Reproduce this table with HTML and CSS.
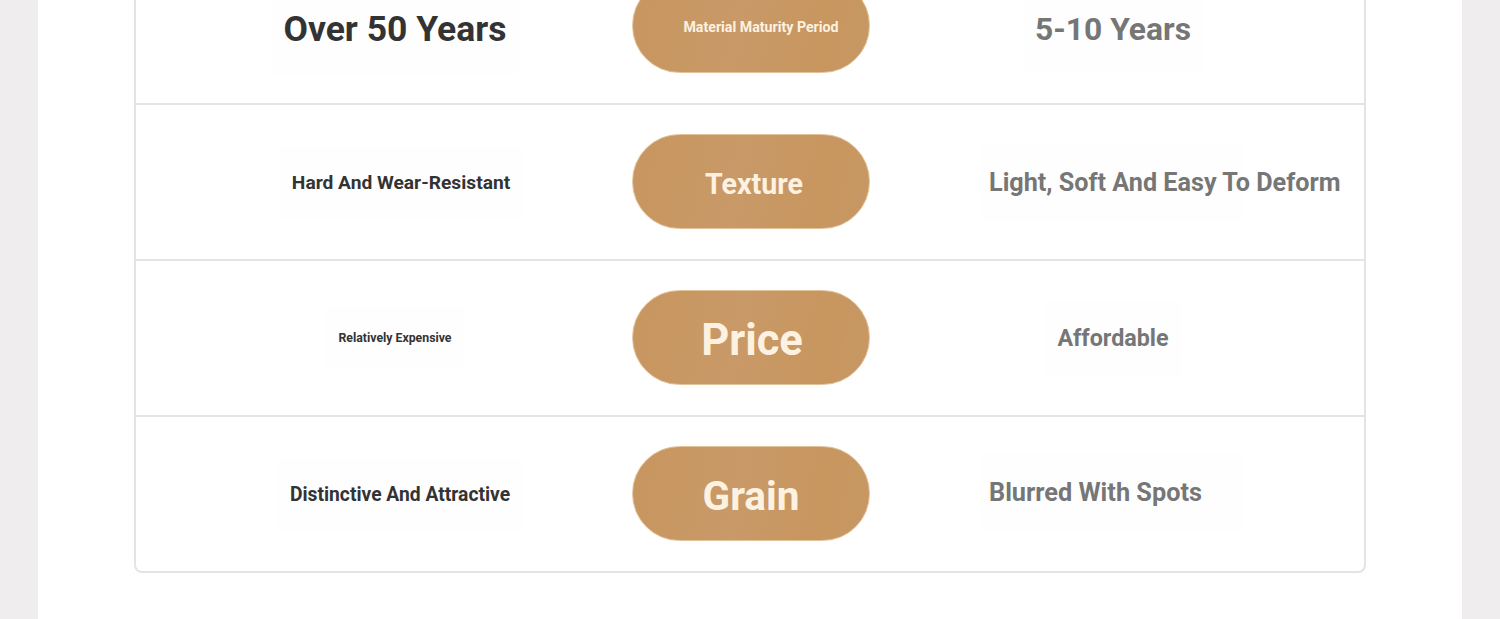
FILE: index.html
```html
<!DOCTYPE html>
<html lang="en">
<head>
<meta charset="utf-8">
<title>Comparison</title>
<link rel="stylesheet" href="styles.css">
</head>
<body>
<div class="page">
  <div class="table">
    <div class="row">
      <div class="cell left"><span class="box t-over">Over 50 Years</span></div>
      <div class="pill"><span class="p-mat">Material Maturity Period</span></div>
      <div class="cell right"><span class="box t-five">5-10 Years</span></div>
    </div>
    <div class="row">
      <div class="cell left"><span class="box t-hard">Hard And Wear-Resistant</span></div>
      <div class="pill"><span class="p-tex">Texture</span></div>
      <div class="cell right"><span class="box wide t-light">Light, Soft And Easy To Deform</span></div>
    </div>
    <div class="row">
      <div class="cell left"><span class="box t-rel">Relatively Expensive</span></div>
      <div class="pill"><span class="p-price">Price</span></div>
      <div class="cell right"><span class="box t-aff">Affordable</span></div>
    </div>
    <div class="row last">
      <div class="cell left"><span class="box t-dist">Distinctive And Attractive</span></div>
      <div class="pill"><span class="p-grain">Grain</span></div>
      <div class="cell right"><span class="box wide t-blur">Blurred With Spots</span></div>
    </div>
  </div>
</div>
</body>
</html>
```
FILE: styles.css
```css
* { box-sizing: border-box; }
html, body { margin: 0; padding: 0; }
body {
  background: #efeded;
  font-family: Roboto, "Liberation Sans", sans-serif;
  height: 619px;
  overflow: hidden;
}
.page {
  margin: 0 38px;
  background: #ffffff;
  height: 619px;
  padding: 0 96px;
  overflow: hidden;
}
.table {
  margin-top: -51px;
  border: 2px solid #e4e4e4;
  border-top: none;
  border-radius: 0 0 8px 8px;
}
.row {
  display: grid;
  grid-template-columns: 496px 238px 1fr;
  align-items: center;
  height: 156px;
  border-bottom: 2px solid #e4e4e4;
}
.row.last { height: 154px; border-bottom: none; }
.cell { display: flex; justify-content: center; align-items: center; }
.left { padding-left: 30px; }
.right { padding-right: 8px; }
.box {
  display: inline-block;
  white-space: nowrap;
  font-weight: 700;
  padding: 24px 12px;
  background: #fefefe;
}
.left .box { color: #333333; }
.right .box { color: #767676; }
.box.wide { width: 262px; text-align: left; padding-left: 7px; }
.t-over { font-size: 35.5px; margin-top: 6px; margin-left: -8px; }
.t-five { font-size: 31.8px; margin-top: 6px; }
.t-hard { font-size: 19.2px; margin-left: 4px; }
.t-light { font-size: 25.2px; }
.t-rel { font-size: 12.3px; margin-left: -8px; }
.t-aff { font-size: 23.3px; }
.t-dist { font-size: 19.3px; margin-left: 2px; }
.t-blur { font-size: 25.3px; margin-top: -4px; }
.pill {
  height: 95px;
  margin-top: -2px;
  border-radius: 48px;
  background: linear-gradient(100deg, #c8965f 0%, #c89a68 45%, #c8965f 80%, #c79865 100%);
  border: 1px solid #e2c299;
  display: flex;
  justify-content: center;
  align-items: center;
  color: #fdf2e1;
  font-weight: 700;
  padding-top: 6px;
}
.p-mat { font-size: 14.2px; padding-left: 20px; margin-top: -2px; }
.p-tex { font-size: 28.6px; padding-left: 6px; }
.p-price { font-size: 43.5px; padding-left: 2px; }
.p-grain { font-size: 40.5px; }
```
